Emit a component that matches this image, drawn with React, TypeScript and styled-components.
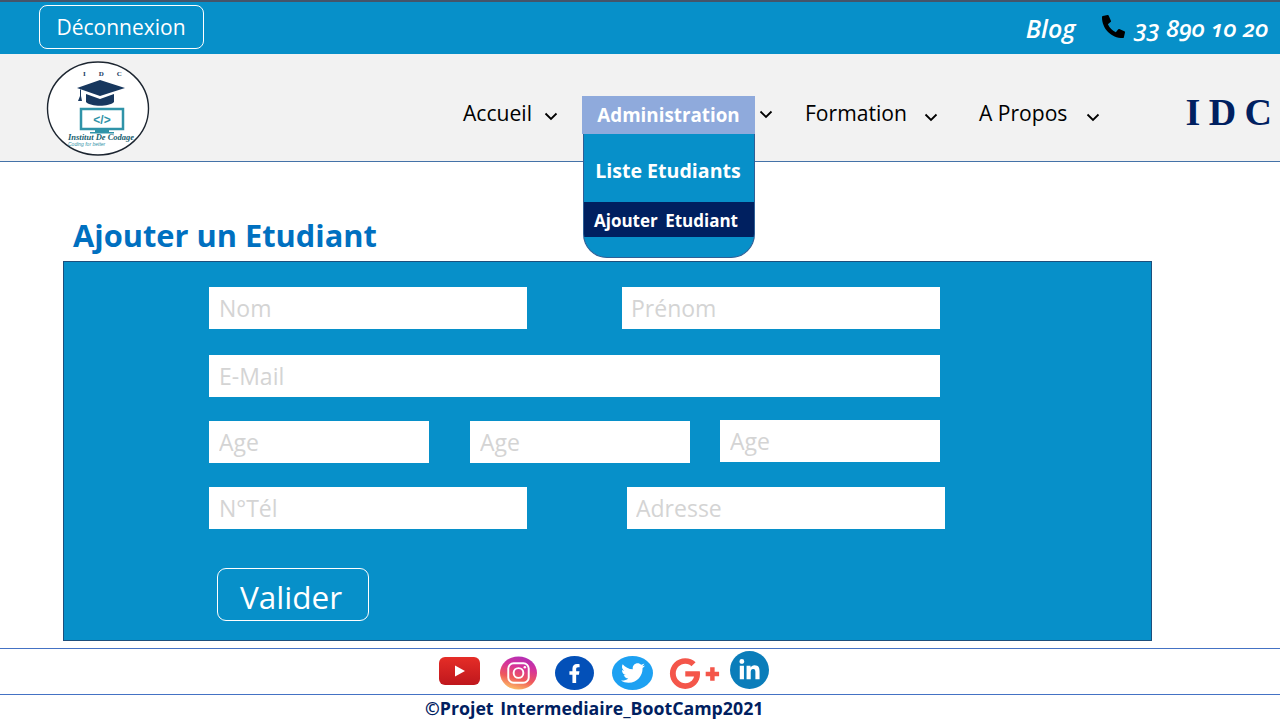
import React from "react";
import styled, { createGlobalStyle } from "styled-components";
import { FaFacebookF, FaTwitter, FaLinkedinIn, FaGooglePlusG, FaPhoneAlt } from "react-icons/fa";

const UI = `"Open Sans", "Noto Sans", sans-serif`;
const BLUE = "#0790c9";

const Global = createGlobalStyle`
  html, body { margin: 0; padding: 0; background: #fff; overflow: hidden; }
  * { box-sizing: border-box; }
  body { font-family: ${UI}; }
`;

const Page = styled.div`
  width: 1280px;
  height: 720px;
  display: flex;
  flex-direction: column;
`;

const TopBar = styled.header`
  height: 54px;
  flex: none;
  background: ${BLUE};
  border-top: 2px solid #44546a;
  display: flex;
  align-items: center;
  justify-content: space-between;
  padding: 0 12px 0 39px;
`;

const LogoutButton = styled.button`
  width: 165px;
  height: 44px;
  margin-top: -2px;
  border: 1px solid #fff;
  border-radius: 8px;
  background: transparent;
  color: #fff;
  font: 400 21px ${UI};
  padding: 0 1px 0 0;
`;

const Contact = styled.div`
  display: flex;
  align-items: center;
  color: #fff;
  font-family: "Open Sans", sans-serif;
  font-style: italic;
  font-weight: 600;
  font-variant-numeric: oldstyle-nums;
`;

const BlogLink = styled.span`
  font-size: 25px;
`;

const PhoneNumber = styled.span`
  font-size: 24px;
  margin-top: -1px;
`;

const PhoneIcon = styled(FaPhoneAlt)`
  color: #000;
  width: 23px;
  height: 23px;
  margin: -4px 10px 0 26px;
`;

const Nav = styled.nav`
  height: 108px;
  flex: none;
  background: #f2f2f2;
  border-bottom: 1px solid #4472a8;
  display: flex;
  align-items: flex-start;
  position: relative;
  z-index: 2;
`;

const Logo = styled.svg`
  width: 104px;
  height: 96px;
  margin: 7px 0 0 46px;
  flex: none;
`;

const NavItem = styled.div<{ $ml: number; $gap: number; $active?: boolean }>`
  display: flex;
  align-items: center;
  height: ${(p) => (p.$active ? 38 : 32)}px;
  margin: 42px 0 0 ${(p) => p.$ml}px;
  gap: ${(p) => p.$gap}px;
  color: #000;
  font: 400 21.1px ${UI};
  position: relative;
  white-space: nowrap;
`;

const Chevron = styled.svg<{ $dy: number }>`
  width: 14px;
  height: 9px;
  flex: none;
  margin-top: ${(p) => p.$dy}px;
`;

const ActiveLabel = styled.div`
  width: 173px;
  height: 38px;
  background: #8faadc;
  color: #fff;
  font: 700 18.8px ${UI};
  display: flex;
  align-items: center;
  justify-content: center;
`;

const Dropdown = styled.div`
  position: absolute;
  left: 1px;
  top: 38px;
  width: 172px;
  height: 124px;
  background: ${BLUE};
  border: 1px solid #2f5f96;
  border-top: none;
  border-radius: 0 0 24px 24px;
  color: #fff;
  overflow: hidden;
`;

const DropLink = styled.div`
  height: 68px;
  display: flex;
  align-items: center;
  justify-content: center;
  font: 700 19.6px ${UI};
  padding: 4px 2px 0 0;
`;

const DropActive = styled.div`
  height: 35px;
  background: #002060;
  display: flex;
  align-items: center;
  padding: 2px 0 0 10px;
  font: 700 17px ${UI};
  word-spacing: 3px;
`;

const Brand = styled.div`
  margin: 36px 0 0 85px;
  color: #002060;
  font: 700 38px "Liberation Serif", serif;
  word-spacing: -1px;
  white-space: nowrap;
`;

const Main = styled.main`
  flex: none;
  height: 486px;
  padding: 51px 128px 0 63px;
  display: flex;
  flex-direction: column;
`;

const Title = styled.h1`
  margin: 0;
  height: 48px;
  padding-left: 10px;
  color: #0070c0;
  font: 700 30.8px/45px ${UI};
  white-space: nowrap;
`;

const Panel = styled.form`
  width: 1089px;
  height: 380px;
  background: ${BLUE};
  border: 1px solid #1d4f7c;
  padding: 25px 0 0 145px;
  display: flex;
  flex-direction: column;
`;

const Row = styled.div<{ $mt?: number }>`
  display: flex;
  align-items: flex-start;
  margin-top: ${(p) => p.$mt ?? 0}px;
`;

const Field = styled.input<{ $w: number; $ml?: number; $up?: boolean; $pl?: number }>`
  width: ${(p) => p.$w}px;
  height: 42px;
  margin-left: ${(p) => p.$ml ?? 0}px;
  margin-top: ${(p) => (p.$up ? -1 : 0)}px;
  border: none;
  border-radius: 0;
  background: #fff;
  padding: 0 10px 0 ${(p) => p.$pl ?? 10}px;
  font: 400 23px ${UI};
  color: #333;
  &::placeholder { color: #d4d4d4; opacity: 1; }
`;

const Submit = styled.button`
  width: 152px;
  height: 53px;
  margin: 39px 0 0 8px;
  background: transparent;
  border: 1px solid #fff;
  border-radius: 9px;
  color: #fff;
  font: 400 31.5px ${UI};
  padding: 4px 4px 0 0;
`;

const Footer = styled.footer`
  flex: none;
  display: flex;
  flex-direction: column;
`;

const SocialBar = styled.div`
  height: 47px;
  border-top: 1px solid #4472c4;
  border-bottom: 1px solid #4472c4;
  display: flex;
  align-items: flex-start;
  padding-left: 438px;
`;

const Round = styled.span<{ $bg: string; $w: number; $h: number; $ml: number; $mt: number }>`
  width: ${(p) => p.$w}px;
  height: ${(p) => p.$h}px;
  margin: ${(p) => p.$mt}px 0 0 ${(p) => p.$ml}px;
  border-radius: 50%;
  background: ${(p) => p.$bg};
  color: #fff;
  display: flex;
  align-items: center;
  justify-content: center;
  flex: none;
`;

const GPlus = styled(FaGooglePlusG)`
  width: 57px;
  height: 41px;
  margin: 4px 0 0 13px;
  color: #f4564a;
  flex: none;
`;

const SocialSvg = styled.svg<{ $ml: number; $mt: number }>`
  margin: ${(p) => p.$mt}px 0 0 ${(p) => p.$ml}px;
  flex: none;
`;

const Copy = styled.div`
  height: 25px;
  padding-left: 425px;
  color: #002060;
  font: 700 17.75px/27px ${UI};
  word-spacing: 2px;
  white-space: nowrap;
`;

const Down = ({ dy }: { dy: number }) => (
  <Chevron $dy={dy} viewBox="0 0 14 9">
    <path d="M1.500 1.500 7 7l5.500-5.500" fill="none" stroke="#000" strokeWidth="1.800" />
  </Chevron>
);

export default function App() {
  return (
    <Page>
      <Global />
      <TopBar>
        <LogoutButton type="button">Déconnexion</LogoutButton>
        <Contact>
          <BlogLink>Blog</BlogLink>
          <PhoneIcon />
          <PhoneNumber>33 890 10 20</PhoneNumber>
        </Contact>
      </TopBar>
      <Nav>
        <Logo viewBox="0 0 104 96">
          <ellipse cx="52" cy="47.500" rx="50.500" ry="46.500" fill="#fff" stroke="#1c2530" strokeWidth="1.400" />
          <text x="37" y="15" fontFamily="Liberation Serif" fontWeight="700" fontSize="7" fill="#17375e" letterSpacing="13">IDC</text>
          <path d="M31 27 54 19l25 8-25 8z" fill="#17375e" />
          <path d="M40 33v8c5 5 23 5 28 0v-8l-14 5z" fill="#17375e" />
          <path d="M34 28v7l-2 5h4l-1-5v-6z" fill="#17375e" />
          <rect x="35" y="48" width="42" height="20" fill="#fff" stroke="#2f93a8" strokeWidth="2.500" />
          <rect x="49" y="69" width="14" height="2" fill="#2f93a8" />
          <rect x="44" y="71" width="24" height="1.500" fill="#2f93a8" />
          <text x="56" y="63" textAnchor="middle" fontFamily="Liberation Sans" fontWeight="700" fontSize="12" fill="#2f93a8">&lt;/&gt;</text>
          <text x="22" y="79" fontFamily="Liberation Serif" fontStyle="italic" fontWeight="700" fontSize="8.500" fill="#17606f">Institut De Codage</text>
          <text x="22" y="85" fontFamily="Liberation Sans" fontStyle="italic" fontSize="5" fill="#2f93a8">Coding for better</text>
        </Logo>
        <NavItem $ml={313} $gap={12}>
          Accueil
          <Down dy={8} />
        </NavItem>
        <NavItem $ml={24} $gap={4} $active>
          <ActiveLabel>Administration</ActiveLabel>
          <Dropdown>
            <DropLink>Liste Etudiants</DropLink>
            <DropActive>Ajouter Etudiant</DropActive>
          </Dropdown>
          <Down dy={-2} />
        </NavItem>
        <NavItem $ml={32} $gap={17}>
          Formation
          <Down dy={10} />
        </NavItem>
        <NavItem $ml={41} $gap={19}>
          A Propos
          <Down dy={10} />
        </NavItem>
        <Brand>I D C</Brand>
      </Nav>
      <Main>
        <Title>Ajouter un Etudiant</Title>
        <Panel>
          <Row>
            <Field $w={318} placeholder="Nom" />
            <Field $w={318} $ml={95} $pl={9} placeholder="Prénom" />
          </Row>
          <Row $mt={26}>
            <Field $w={731} placeholder="E-Mail" />
          </Row>
          <Row $mt={24}>
            <Field $w={220} placeholder="Age" />
            <Field $w={220} $ml={41} placeholder="Age" />
            <Field $w={220} $ml={30} $up placeholder="Age" />
          </Row>
          <Row $mt={24}>
            <Field $w={318} placeholder="N°Tél" />
            <Field $w={318} $ml={100} $pl={9} placeholder="Adresse" />
          </Row>
          <Submit type="button">Valider</Submit>
        </Panel>
      </Main>
      <Footer>
        <SocialBar>
          <SocialSvg $ml={1} $mt={8} width="41" height="28" viewBox="0 0 41 28">
            <defs>
              <linearGradient id="yt" x1="0" y1="0" x2="0" y2="1">
                <stop offset="0" stopColor="#e52d27" />
                <stop offset="1" stopColor="#bf171d" />
              </linearGradient>
            </defs>
            <rect width="41" height="28" rx="6" fill="url(#yt)" />
            <path d="M16 8.500v11l10-5.500z" fill="#fff" />
          </SocialSvg>
          <SocialSvg $ml={20} $mt={7} width="37" height="34" viewBox="0 0 38 34">
            <defs>
              <linearGradient id="ig" x1="0.300" y1="1" x2="0.600" y2="0">
                <stop offset="0" stopColor="#fdc468" />
                <stop offset="0.350" stopColor="#ef5a5a" />
                <stop offset="0.700" stopColor="#d6339b" />
                <stop offset="1" stopColor="#b32fb5" />
              </linearGradient>
            </defs>
            <ellipse cx="19" cy="17" rx="19" ry="17" fill="url(#ig)" />
            <rect x="8.500" y="7" width="21" height="20" rx="5.500" fill="none" stroke="#fff" strokeWidth="2" />
            <circle cx="19" cy="17" r="5" fill="none" stroke="#fff" strokeWidth="2" />
            <circle cx="25.500" cy="11" r="1.300" fill="#fff" />
          </SocialSvg>
          <Round $bg="#0350b8" $w={39} $h={34} $ml={18} $mt={7}>
            <FaFacebookF size={19} />
          </Round>
          <Round $bg="#1da1f2" $w={41} $h={34} $ml={18} $mt={7}>
            <FaTwitter size={24} />
          </Round>
          <GPlus />
          <Round $bg="#0a7dba" $w={39} $h={38} $ml={7} $mt={2}>
            <FaLinkedinIn size={23} />
          </Round>
        </SocialBar>
        <Copy>©Projet Intermediaire_BootCamp2021</Copy>
      </Footer>
    </Page>
  );
}
